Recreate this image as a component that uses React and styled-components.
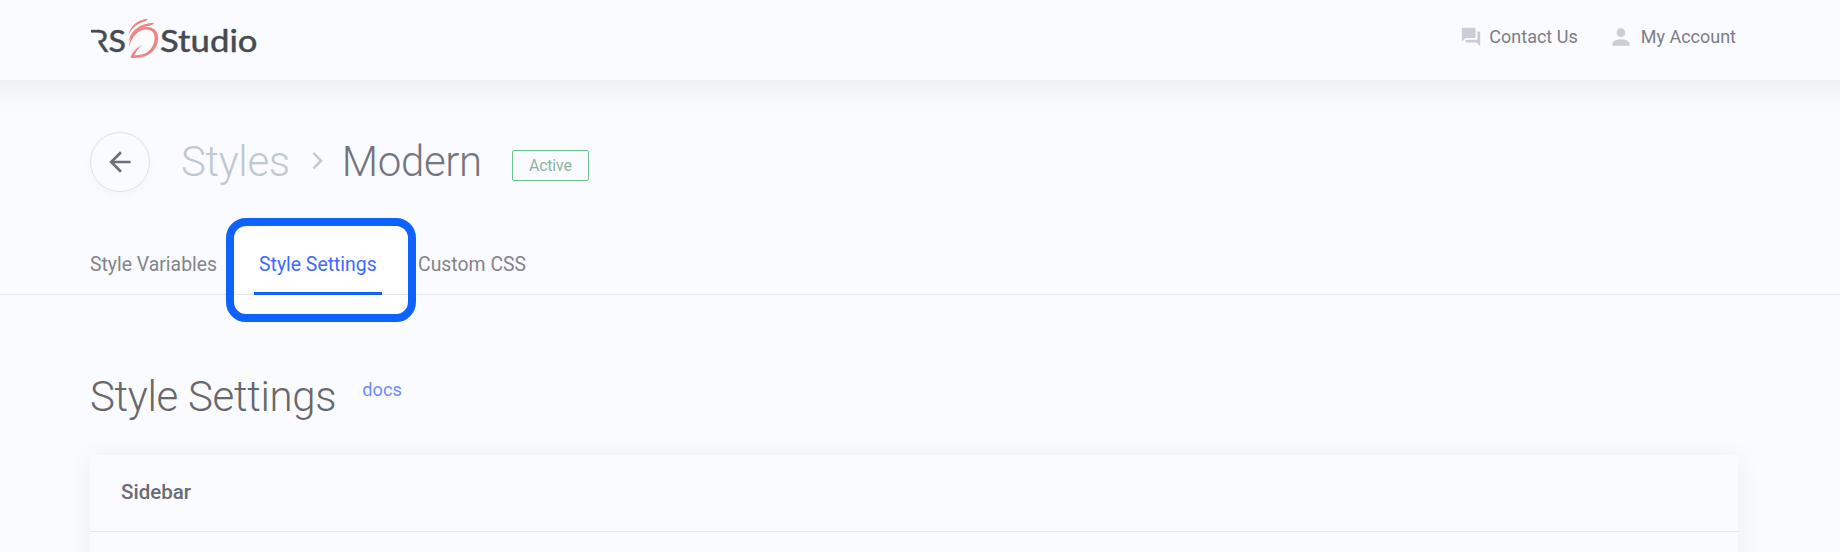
import React from "react";
import styled, { createGlobalStyle } from "styled-components";

const Global = createGlobalStyle`
  *, *::before, *::after { box-sizing: border-box; }
  html, body { margin: 0; height: 552px; overflow: hidden; background: #fafbff; }
  body { font-family: Roboto, "Liberation Sans", sans-serif; color: #6c6c74; }
`;

const Page = styled.div`
  height: 552px;
  overflow: hidden;
  background: #fafbff;
`;

const Header = styled.header`
  height: 80px;
  margin: 0 -60px;
  padding: 0 164px 0 150px;
  display: flex;
  justify-content: space-between;
  align-items: flex-start;
  background: #fafbff;
  box-shadow: 0 10px 30px rgba(0, 0, 0, 0.06);
`;

const LogoSvg = styled.svg`
  display: block;
  margin-top: 15px;
  font-family: Lato, sans-serif;
  font-weight: 500;
`;

const HeaderNav = styled.nav`
  display: flex;
  gap: 30px;
  padding-top: 23px;
`;

const NavLink = styled.a`
  display: flex;
  align-items: center;
  gap: 7px;
  height: 28px;
  font-size: 18px;
  line-height: 28px;
  color: #7d7d85;
  svg { fill: #c8cdd6; display: block; }
`;

const TitleBar = styled.section`
  display: flex;
  align-items: flex-start;
  padding: 52px 0 0 90px;
  height: 133px;
`;

const BackButton = styled.button`
  width: 60px;
  height: 60px;
  padding: 0;
  border: 1px solid #dfe2e7;
  border-radius: 50%;
  background: #fafbff;
  box-shadow: 0 3px 8px rgba(0, 0, 0, 0.03);
  display: grid;
  place-items: center;
`;

const Crumbs = styled.div`
  display: flex;
  margin-left: 31px;
  font-size: 42px;
  line-height: 60px;
  font-weight: 300;
  letter-spacing: -0.35px;
`;

const Crumb = styled.span`
  color: ${(p) => (p.$current ? "#74747f" : "#bfc9d0")};
`;

const Chevron = styled.svg`
  margin: 19px 17px 0 21px;
  width: 14px;
  height: 20px;
`;

const Badge = styled.span`
  width: 77px;
  height: 31px;
  margin: 18px 0 0 30px;
  border: 1px solid #6cc58b;
  border-radius: 2px;
  font-size: 16px;
  line-height: 29px;
  letter-spacing: -0.2px;
  text-align: center;
  color: #8fb5a1;
`;

const Tabs = styled.nav`
  height: 82px;
  padding-left: 90px;
  display: flex;
  border-bottom: 1px solid #e6e7ec;
`;

const Tab = styled.a`
  font-size: 19.4px;
  line-height: 26px;
  padding-top: 39px;
  color: #84848a;
`;

const ActiveFrame = styled.div`
  flex: none;
  width: 190px;
  height: 104px;
  margin: 5px 2px 0 9px;
  border: 8px solid #0f62fe;
  border-radius: 20px;
  display: flex;
  justify-content: flex-start;
  align-items: flex-start;
  background: linear-gradient(#e6e7ec, #e6e7ec) 0 68px / 100% 1px no-repeat #fff;
`;

const ActiveTab = styled.a`
  width: 128px;
  height: 69px;
  margin-left: 20px;
  padding: 26px 0 0 5px;
  border-bottom: 3px solid #1262fa;
  font-size: 19.4px;
  line-height: 26px;
  color: #3d6bff;
  white-space: nowrap;
`;

const Content = styled.main`
  padding: 72px 102px 0 90px;
`;

const Heading = styled.div`
  display: flex;
  height: 88px;
`;

const Title = styled.h1`
  margin: 0;
  font-size: 42px;
  line-height: 60px;
  font-weight: 300;
  letter-spacing: -0.3px;
  color: #68686c;
`;

const Docs = styled.a`
  margin: 10px 0 0 26px;
  font-size: 18.2px;
  line-height: 26px;
  color: #6c8cff;
`;

const Card = styled.section`
  height: 200px;
  border-radius: 3px;
  background: #fafbff;
  box-shadow: 0 2px 26px rgba(0, 0, 0, 0.06);
`;

const CardHeader = styled.h2`
  margin: 0;
  height: 77px;
  padding: 0 31px;
  border-bottom: 1px solid #e4e5f0;
  font-size: 20.5px;
  line-height: 75px;
  font-weight: 500;
  color: #6b6b73;
`;

function Logo() {
  return (
    <LogoSvg width="170" height="46" viewBox="90 15 170 46" fill="#484a51">
      <clipPath id="r-bowl">
        <rect x="98.500" y="20" width="20" height="40" />
      </clipPath>
      <g stroke="#484a51" strokeWidth="0.300">
        <text x="90" y="51.500" fontSize="31" textLength="18.500" lengthAdjust="spacingAndGlyphs" clipPath="url(#r-bowl)">R</text>
        <text x="108.500" y="51.500" fontSize="31" textLength="17.500" lengthAdjust="spacingAndGlyphs">S</text>
        <text x="160" y="51.500" fontSize="31" textLength="97.500" lengthAdjust="spacingAndGlyphs">Studio</text>
      </g>
      <path d="M91 31.200h8.500" stroke="#484a51" strokeWidth="2.800" />
      <g fill="#ef8582">
        <path d="M129.200 48C128.500 37 135 28 145 27 155 26 159.500 33 157.800 41.500 156 51 148 59 130.500 58 131.500 53 136 48 142 45 137.500 49.500 135.500 52.500 134.500 55.300 146 55.500 152.200 50 154.200 41.500 156 33 151.500 28.800 145 29.600 136 31 130.300 40 129.200 48Z" />
        <path d="M128.500 42C130 31.500 139 23.500 154 22.800 153.500 24.200 152 25 150.500 25.400 140 26.500 133 32.500 128.500 42Z" />
        <path d="M128.200 36C130 26.500 137 19.500 148 18.800 147 20.500 145 21.500 143 22 135.500 24.200 131 29.500 128.200 36Z" />
      </g>
    </LogoSvg>
  );
}

export default function App() {
  return (
    <Page>
      <Global />
      <Header>
        <Logo />
        <HeaderNav>
          <NavLink>
            <svg width="22" height="22" viewBox="0 0 24 24">
              <path d="M21 6h-2v9H6v2c0 .55.45 1 1 1h11l4 4V7c0-.55-.45-1-1-1zm-4 6V3c0-.55-.45-1-1-1H3c-.55 0-1 .45-1 1v14l4-4h10c.55 0 1-.45 1-1z" />
            </svg>
            Contact Us
          </NavLink>
          <NavLink>
            <svg width="26" height="26" viewBox="0 0 24 24">
              <path d="M12 12c2.210 0 4-1.790 4-4s-1.790-4-4-4-4 1.790-4 4 1.790 4 4 4zm0 2c-2.670 0-8 1.340-8 4v2h16v-2c0-2.660-5.330-4-8-4z" />
            </svg>
            My Account
          </NavLink>
        </HeaderNav>
      </Header>
      <TitleBar>
        <BackButton aria-label="Back">
          <svg width="32" height="32" viewBox="0 0 24 24" fill="#6f6e7b">
            <path d="M20 11H7.830l5.590-5.590L12 4l-8 8 8 8 1.410-1.410L7.830 13H20v-2z" />
          </svg>
        </BackButton>
        <Crumbs>
          <Crumb>Styles</Crumb>
          <Chevron viewBox="0 0 14 20" fill="none" stroke="#bfc9d0" strokeWidth="2.500">
            <path d="M2.500 2L10 9.700 2.500 17.500" />
          </Chevron>
          <Crumb $current>Modern</Crumb>
        </Crumbs>
        <Badge>Active</Badge>
      </TitleBar>
      <Tabs>
        <Tab>Style Variables</Tab>
        <ActiveFrame>
          <ActiveTab>Style Settings</ActiveTab>
        </ActiveFrame>
        <Tab>Custom CSS</Tab>
      </Tabs>
      <Content>
        <Heading>
          <Title>Style Settings</Title>
          <Docs>docs</Docs>
        </Heading>
        <Card>
          <CardHeader>Sidebar</CardHeader>
        </Card>
      </Content>
    </Page>
  );
}
